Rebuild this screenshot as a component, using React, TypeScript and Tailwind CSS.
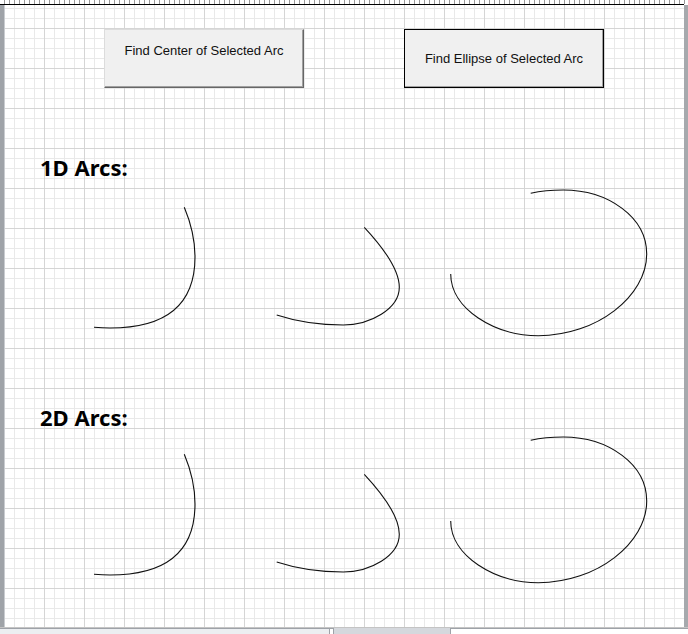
import React from 'react';

const arcPaths = [
  'M184.3 208.3 C190 222 195 240 195 258 C195 310 160 329 110 329 C104 329 99 328.7 94 328.3',
  'M364.3 228.3 C378 243 399.3 268 399.3 288.3 C399.3 310 370 326 343.3 326 C320 326 295 322 276.7 316',
  'M530.7 194.3 C541 192 552 191 563.3 191 C608 191 646.7 218 646.7 255 C646.7 297 597 336.7 538.3 336.7 C495 336.7 450.7 310 450.7 275',
];

// arcs are drawn in page coordinates; the second row is the first one moved down
const ArcRow: React.FC<{ top: number; shift: number }> = ({ top, shift }) => (
  <svg width={679} height={157} viewBox={`5 ${top} 679 157`} className="block shrink-0">
    <g transform={`translate(0 ${shift})`} fill="none" stroke="#111" strokeWidth={1.1}>
      {arcPaths.map((d, i) => (
        <path key={i} d={d} />
      ))}
    </g>
  </svg>
);

const Heading: React.FC<{ children: React.ReactNode; className?: string }> = ({ children, className }) => (
  <div
    className={`ml-[35px] h-[30px] text-[22px] leading-[30px] font-bold text-black font-['Noto_Sans',sans-serif] ${className ?? ''}`}
  >
    {children}
  </div>
);

export default function App() {
  return (
    <div className="w-[688px] h-[634px] overflow-hidden bg-white flex flex-col font-['Liberation_Sans',Arial,sans-serif]">
      {/* ruler ticks and page edge */}
      <div className="h-[4px] shrink-0 bg-white bg-[linear-gradient(to_right,#9a9a9a_1px,transparent_1px)] bg-[size:5px_100%] bg-[position:4px_0]" />
      <div className="h-px shrink-0 bg-black mr-[4px]" />

      <div className="flex flex-1 min-h-0">
        <div className="w-[5px] shrink-0 flex">
          <div className="w-[4px] bg-[#9fa3a8]" />
          <div className="w-px bg-[#c9ccd0]" />
        </div>

        <div className="flex-1 flex flex-col bg-white bg-[linear-gradient(to_right,#d5d5d5_1px,transparent_1px),linear-gradient(to_bottom,#d5d5d5_1px,transparent_1px),linear-gradient(to_right,#e9e9e9_1px,transparent_1px),linear-gradient(to_bottom,#e9e9e9_1px,transparent_1px)] bg-[size:40px_40px,40px_40px,10px_10px,10px_10px] bg-[position:39px_0,0_23px,9px_0,0_3px]">
          <div className="flex mt-[24px] ml-[99px] gap-[100px]">
            <button className="w-[200px] h-[59px] bg-[#f0f0f0] border border-t-[#dcdcdc] border-l-[#dcdcdc] border-r-[#666] border-b-[#666] shadow-[inset_-1px_-1px_0_#a0a0a0] flex justify-center pt-[13px] text-[13px] leading-[15px] text-[#111]">
              Find Center of Selected Arc
            </button>
            <button className="w-[200px] h-[59px] bg-[#f0f0f0] border border-black shadow-[inset_-1px_-1px_0_#a0a0a0] flex items-center justify-center text-[13px] leading-[15px] text-[#111]">
              Find Ellipse of Selected Arc
            </button>
          </div>

          <Heading className="mt-[64px]">1D Arcs:</Heading>
          <ArcRow top={183} shift={0} />

          <Heading className="mt-[63px]">2D Arcs:</Heading>
          <ArcRow top={433} shift={247} />
        </div>

        <div className="w-[4px] shrink-0 bg-[#a6a9ad]" />
      </div>

      {/* bottom frame and tabs */}
      <div className="h-px shrink-0 bg-[#c4c4c4]" />
      <div className="h-[6px] shrink-0 flex bg-[#d5d8dd]">
        <div className="w-[330px] bg-[#eceef1] border-t border-r border-[#9ea2a8]" />
        <div className="w-[4px] bg-white border-t border-r border-[#9ea2a8]" />
        <div className="w-[116px]" />
        <div className="flex-1 bg-white border-t border-l border-[#9ea2a8]" />
      </div>
    </div>
  );
}
